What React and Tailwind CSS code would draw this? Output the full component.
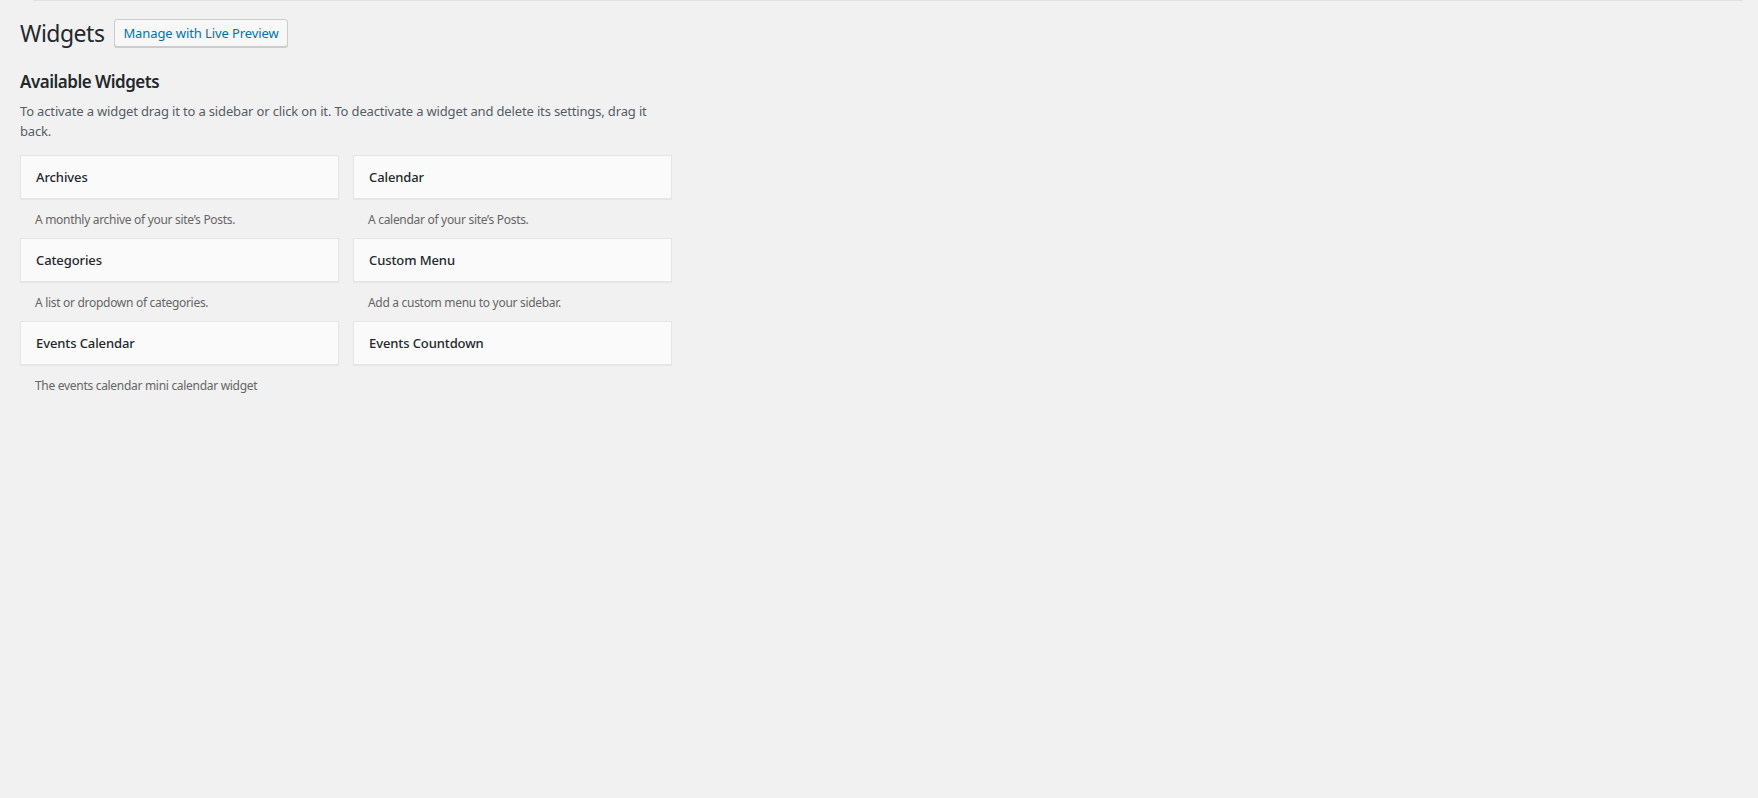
import React from "react";

const widgets = [
  ["Archives", "A monthly archive of your site’s Posts."],
  ["Calendar", "A calendar of your site’s Posts."],
  ["Categories", "A list or dropdown of categories."],
  ["Custom Menu", "Add a custom menu to your sidebar."],
  ["Events Calendar", "The events calendar mini calendar widget"],
  ["Events Countdown", ""],
];

export default function App() {
  return (
    <div
      className="min-h-[798px] w-full bg-[#f1f1f1] text-[#23282d]"
      style={{ fontFamily: '"Noto Sans", "Open Sans", sans-serif' }}
    >
      <div className="ml-[33px] mr-[15px] h-px bg-[#e2e2e2]" />
      <div className="px-[20px] pt-[17px]">
        <div className="flex items-center gap-[10px]">
          <h1 className="text-[23px] font-normal leading-[30px] tracking-[-0.5px] text-[#23282d]">Widgets</h1>
          <button className="h-[28px] rounded-[3px] border border-[#cccccc] bg-[#f7f7f7] px-[8px] text-[13px] leading-[26px] tracking-[-0.1px] text-[#0073aa] shadow-[0_1px_0_#cccccc]">
            Manage with Live Preview
          </button>
        </div>
        <div className="w-[652px]">
          <h2 className="mt-[23px] text-[17px] font-semibold leading-[22px] tracking-[-0.5px] text-[#23282d]">Available Widgets</h2>
          <p className="mt-[8px] text-[13px] leading-[20px] tracking-[-0.15px] text-[#555d66]">
            To activate a widget drag it to a sidebar or click on it. To deactivate a widget and delete its settings, drag it back.
          </p>
          <div className="mt-[14px] grid grid-cols-2 gap-x-[14px]">
            {widgets.map(([title, desc]) => (
              <div key={title}>
                <div className="flex h-[44px] items-center border border-[#e5e5e5] bg-[#fafafa] px-[15px] pt-[2px] text-[13px] font-medium tracking-[-0.1px] text-[#23282d] shadow-[0_1px_1px_rgba(0,0,0,0.04)]">
                  {title}
                </div>
                <div className="px-[15px] pb-[9px] pt-[12px] text-[12px] leading-[18px] tracking-[-0.3px] text-[#666666]">
                  {desc || "\u00a0"}
                </div>
              </div>
            ))}
          </div>
        </div>
      </div>
    </div>
  );
}
